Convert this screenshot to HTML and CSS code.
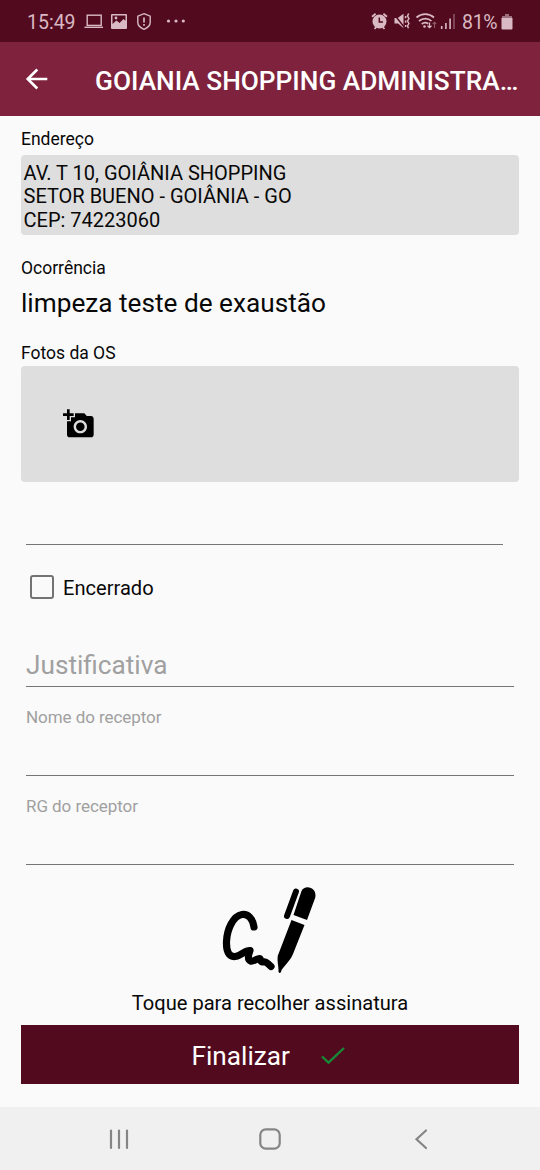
FILE: index.html
```html
<!DOCTYPE html>
<html lang="pt-BR">
<head>
<meta charset="utf-8">
<title>Ordem de serviço</title>
<link rel="stylesheet" href="styles.css">
</head>
<body>
<div class="screen">
  <div class="status">
    <span class="clock">15:49</span>
    <svg class="status-left" width="110" height="28" viewBox="80 8 110 28" fill="none" stroke="#d9b9c3" stroke-width="1.4">
      <rect x="87.200" y="15.200" width="14" height="10.200"/><path d="M84.500 27.300H103"/>
      <path fill="#d9b9c3" stroke="none" fill-rule="evenodd" d="M112 14h14a1 1 0 0 1 1 1v13a1 1 0 0 1-1 1h-14a1 1 0 0 1-1-1V15a1 1 0 0 1 1-1zM112.500 15.500v8.500l4-3.500 3 2.500 4-4 2 1.800v-5.300z"/>
      <circle cx="116" cy="18" r="1.400" fill="#d9b9c3" stroke="none"/>
      <path d="M144 13.700l6.200 2.500v6.300c0 3-2.500 5.200-6.200 6.800-3.700-1.600-6.200-3.800-6.200-6.800v-6.300z"/>
      <path d="M144 17.500v5M144 24v1.700" stroke-width="1.700"/>
      <g fill="#d9b9c3" stroke="none"><circle cx="168.500" cy="21" r="1.600"/><circle cx="176" cy="21" r="1.600"/><circle cx="183.300" cy="21" r="1.600"/></g>
    </svg>
    <svg class="status-right" width="92" height="28" viewBox="366 8 92 28" fill="none" stroke="#d9b9c3" stroke-width="1.500">
      <circle cx="379.500" cy="21.500" r="7" fill="#d9b9c3" stroke="none"/>
      <path d="M372 16.800l3.600-3M387 16.800l-3.600-3M374.500 29l1.800-2M384.500 29l-1.800-2" stroke-width="1.800"/>
      <path d="M379.300 17.500v4.500h3.700" stroke="#520b1e"/>
      <path fill="#d9b9c3" stroke="none" d="M394.500 18h3.200l5.800-4.300v14.500l-5.300-4.700h-3.700z"/>
      <path d="M393.500 13.500l11 14" stroke="#520b1e" stroke-width="1.400"/>
      <path d="M405.600 16v2.300M405.600 20.500v2.300M405.600 25v2M408.700 13.500l-1.200 2.500 1.400 2.500-1.400 2.500 1.400 2.500-1.400 2.500 1 2.200" stroke-width="1.500"/>
      <path d="M416.500 17.500c5-4.500 12.500-4.500 17.500 0M419 21c3.700-3.300 9-3.300 12.500 0M421.700 24c2.200-1.700 4.500-1.700 6.500-.3" stroke-width="1.700"/>
      <circle cx="424.500" cy="26.500" r="1.300" fill="#d9b9c3" stroke="none"/>
      <path d="M429.500 22.500v5M427.500 25.700l2 2 2-2" stroke-width="1.300"/>
      <path d="M434.500 28v-5.500M432.800 24l1.700-1.700 1.700 1.700" stroke="#8e5868" stroke-width="1.100"/>
      <path d="M441.700 29v-3M445.900 29v-6M450.100 29V18.500" stroke-width="1.600"/><path d="M454 29V14" stroke="#8e5868"/>
    </svg>
    <span class="charge">81%</span>
    <svg class="battery" width="12" height="18" viewBox="0 0 12 18"><path d="M4 1h4v2h3v3H1V3h3z" fill="#9e6f7d"/><path d="M.5 5h11v10.500a1 1 0 0 1-1 1h-9a1 1 0 0 1-1-1z" fill="#d9b9c3"/></svg>
  </div>
  <header class="bar">
    <svg class="back" width="24" height="24" viewBox="0 0 24 24" fill="none" stroke="#fff" stroke-width="2.600"><path d="M22.300 12H3M12.300 2.500L2.700 12l9.600 9.500"/></svg>
    <h1 class="title">GOIANIA SHOPPING ADMINISTRA…</h1>
  </header>
  <main class="content">
    <div class="label label-address">Endereço</div>
    <div class="address">AV. T 10, GOIÂNIA SHOPPING<br>SETOR BUENO - GOIÂNIA - GO<br>CEP: 74223060</div>
    <div class="label label-issue">Ocorrência</div>
    <div class="issue">limpeza teste de exaustão</div>
    <div class="label label-photos">Fotos da OS</div>
    <div class="photos">
      <svg width="32" height="32" viewBox="0 0 24 24"><path d="M3 4V1h2v3h3v2H5v3H3V6H0V4h3zm3 6V7h3V4h7l1.830 2H21c1.100 0 2 .9 2 2v12c0 1.100-.9 2-2 2H5c-1.100 0-2-.9-2-2V10h3zm7 9c2.760 0 5-2.240 5-5s-2.240-5-5-5-5 2.240-5 5 2.240 5 5 5zm-3.200-5c0 1.770 1.430 3.200 3.200 3.200s3.200-1.430 3.200-3.200-1.430-3.200-3.200-3.200-3.200 1.430-3.200 3.200z"/></svg>
    </div>
    <div class="entry"></div>
    <div class="check"><span class="box"></span><span class="check-text">Encerrado</span></div>
    <div class="field justification">Justificativa</div>
    <div class="field receiver">Nome do receptor</div>
    <div class="field receiver">RG do receptor</div>
    <div class="signature">
      <svg width="140" height="120" viewBox="0 0 140 120">
        <path d="M54 58c-1-8-6-13.500-12-12.500-9 1.500-15 15-15.500 27-.4 10 2.500 15.500 8.500 15 6-.5 10-6.500 15-6-1.500 4-3 9 .5 10.500 3 1 6-2.500 9-2.500 1.500 0 .5 3.500 3 3.500s3-1 8.500 4.500" fill="none" stroke="#000" stroke-width="7.200" stroke-linecap="round" stroke-linejoin="round"/>
        <path d="M96 22.500L87 47" stroke="#000" stroke-width="6" stroke-linecap="round"/>
        <path d="M101.500 22c3-7 16-4 13.800 6.500L107 51l-13.500-5zM91.500 51l13 5-11.500 29c-2 5-6 9-11.500 16-.3 4-3.500 4-3 0 0-4-1.500-9-.8-14z"/>
      </svg>
    </div>
    <div class="hint">Toque para recolher assinatura</div>
    <div class="finish"><span>Finalizar</span><svg width="24" height="20" viewBox="0 0 24 20" fill="none" stroke="#178a38" stroke-width="2.300"><path d="M1 10.500l6.500 6.200L23 2"/></svg></div>
  </main>
  <nav class="nav">
    <svg width="22" height="22" viewBox="0 0 22 22" stroke="#858585" stroke-width="2.200" stroke-linecap="round"><path d="M3 2.500v17.500M11 2.500v17.500M19 2.500v17.500"/></svg>
    <svg width="22" height="22" viewBox="0 0 22 22" fill="none" stroke="#858585" stroke-width="2.200"><rect x="1.300" y="1.300" width="19.400" height="19.400" rx="5.500"/></svg>
    <svg width="22" height="22" viewBox="0 0 22 22" fill="none" stroke="#858585" stroke-width="2.200" stroke-linecap="round"><path d="M16 2.500L6.500 11.200l9.500 8.800"/></svg>
  </nav>
</div>
</body>
</html>
```
FILE: styles.css
```css
* { box-sizing: border-box; }
body { margin: 0; font-family: Roboto, sans-serif; color: #080808; background: #fafafa; }
svg { display: block; flex: none; }
.screen { width: 540px; height: 1170px; display: flex; flex-direction: column; overflow: hidden; }
.status { height: 42px; flex: none; background: #520b1e; color: #d9b9c3; display: flex; align-items: center; padding: 0 27px 0 27px; font-size: 19.500px; }
.clock { width: 53px; margin-top: 2px; }
.status-left { margin-top: 2px; }
.status-right { margin: 2px 4px 0 auto; }
.charge { width: 39px; margin-top: 2px; white-space: nowrap; letter-spacing: -.3px; }
.battery { margin: 1px 0 0 0; }
.bar { height: 74px; flex: none; background: #7f223d; display: flex; align-items: center; padding: 0 0 0 25px; }
.title { margin: 3px 0 0 46px; font-size: 26.250px; font-weight: 500; color: #fff; white-space: nowrap; }
.content { flex: 1; padding: 0 21px; display: flex; flex-direction: column; }
.label { font-size: 17.500px; line-height: 20px; flex: none; }
.label-address { margin-top: 13px; height: 26px; }
.address { height: 80px; padding: 7px 2.500px; border-radius: 4px; background: #dedede; font-size: 20px; line-height: 23.400px; }
.label-issue { margin-top: 23px; }
.issue { margin-top: 10px; font-size: 26.200px; line-height: 31px; }
.label-photos { margin-top: 24px; height: 23px; }
.photos { height: 116px; padding: 42px; border-radius: 4px; background: #dedede; }
.entry { margin: 0 16px 0 5px; height: 63px; border-bottom: 1.400px solid #757575; }
.check { height: 84px; display: flex; align-items: center; padding-left: 9px; }
.box { width: 24px; height: 24px; border: 2px solid #737373; border-radius: 3px; }
.check-text { margin: 2px 0 0 9px; font-size: 20.100px; }
.field { margin: 0 5px; border-bottom: 1.400px solid #757575; color: #a0a0a0; }
.justification { height: 58px; padding-top: 21px; font-size: 26.200px; line-height: 31px; }
.receiver { height: 89px; padding-top: 20px; font-size: 17px; line-height: 20px; letter-spacing: -.06px; }
.signature { height: 126px; padding: 4px 0 0 179px; }
.hint { height: 34px; text-align: center; font-size: 20.100px; line-height: 24px; }
.finish { height: 59px; background: #520b1e; color: #fff; display: flex; align-items: center; gap: 31px; padding: 2px 0 0 170.500px; font-size: 26.200px; }
.nav { height: 63px; flex: none; background: #f0f0f0; display: flex; justify-content: space-between; align-items: center; padding: 0 108px; }
```
